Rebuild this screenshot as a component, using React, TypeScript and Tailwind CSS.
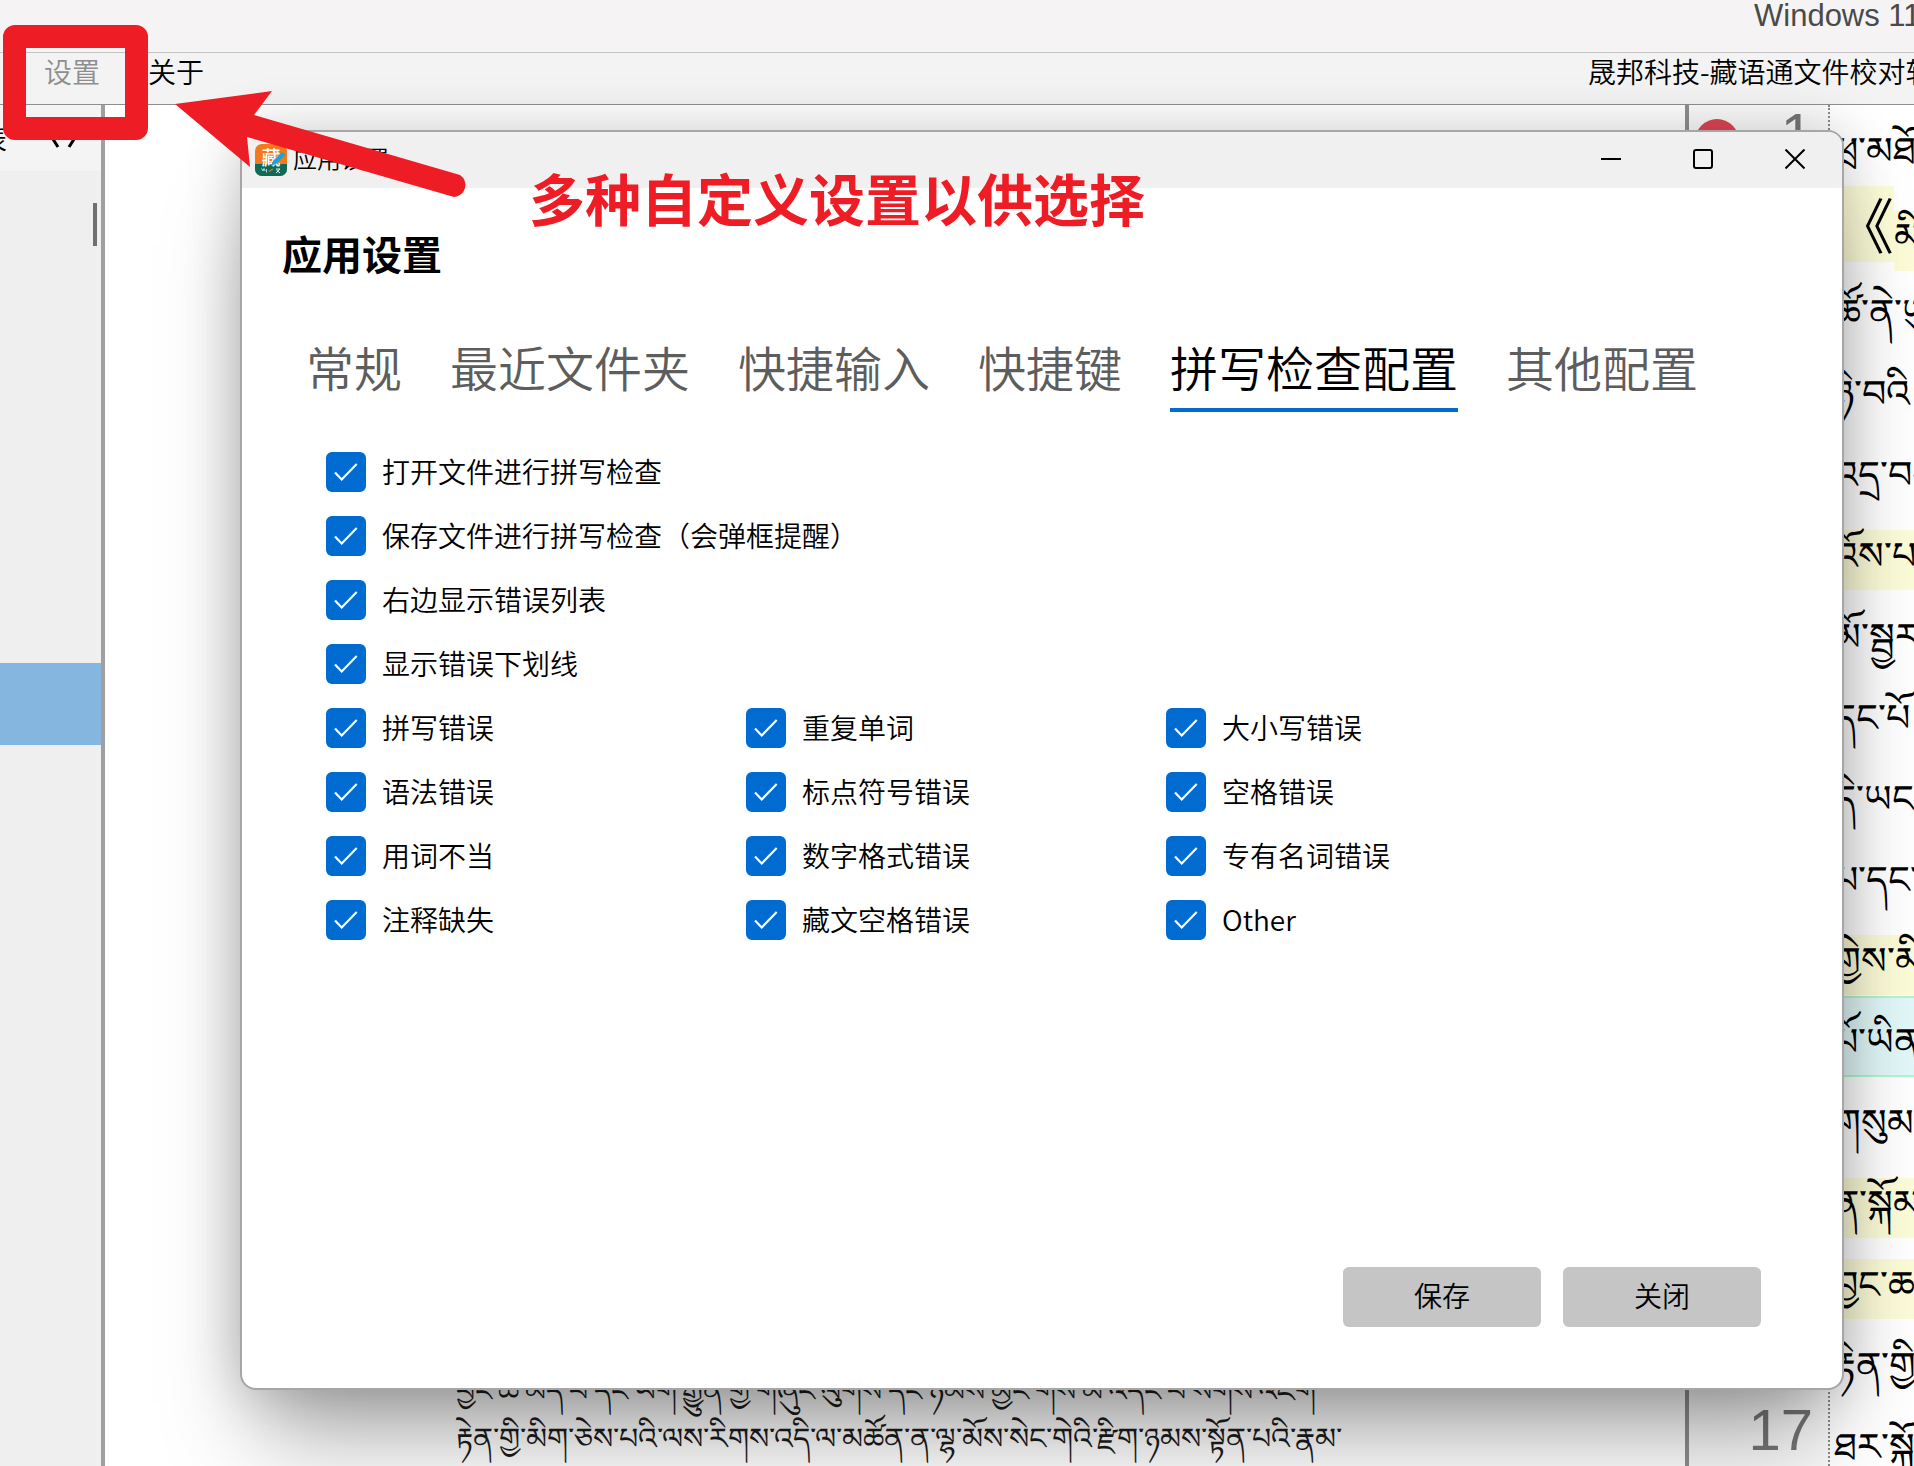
import { useState } from 'react';

const TABS = ['常规', '最近文件夹', '快捷输入', '快捷键', '拼写检查配置', '其他配置'];

const GENERAL_OPTIONS = [
  '打开文件进行拼写检查',
  '保存文件进行拼写检查（会弹框提醒）',
  '右边显示错误列表',
  '显示错误下划线',
];

const ERROR_TYPES = [
  '拼写错误', '重复单词', '大小写错误',
  '语法错误', '标点符号错误', '空格错误',
  '用词不当', '数字格式错误', '专有名词错误',
  '注释缺失', '藏文空格错误', 'Other',
];

type Mark = 'none' | 'error' | 'current';

const EDITOR_LINES: { text: string; mark: Mark; quote?: boolean }[] = [
  { text: 'ཕྲ་མཐོང', mark: 'none' },
  { text: 'མི', mark: 'error', quote: true },
  { text: 'ཚོ་ནེ་ཡུལ', mark: 'none' },
  { text: 'ཉེ་བའི', mark: 'none' },
  { text: 'འདྲ་བར', mark: 'none' },
  { text: 'འོས་པའི', mark: 'error' },
  { text: 'མོ་སྦྱར', mark: 'none' },
  { text: 'དང་པོ', mark: 'none' },
  { text: 'དེ་ཡང', mark: 'none' },
  { text: 'པ་དང་', mark: 'none' },
  { text: 'གྱེས་མི', mark: 'error' },
  { text: 'པོ་ཡིན', mark: 'current' },
  { text: 'གསུམ་', mark: 'none' },
  { text: 'ན་སྐོམ', mark: 'error' },
  { text: 'བྱང་ཆ', mark: 'error' },
  { text: 'རྟེན་གྱི', mark: 'none' },
  { text: 'ཐར་སྐོ', mark: 'none' },
];

function CheckOption({ label }: { label: string }) {
  const [checked, setChecked] = useState(true);
  return (
    <label className="flex h-16 items-center gap-4 text-[28px] whitespace-nowrap">
      <span className="grid size-10 shrink-0">
        <input
          type="checkbox"
          checked={checked}
          onChange={(e) => setChecked(e.target.checked)}
          className="col-start-1 row-start-1 size-10 appearance-none rounded-md border-2 border-[#006cd2] bg-white checked:bg-[#006cd2]"
        />
        <svg viewBox="0 0 40 40" className="pointer-events-none col-start-1 row-start-1 size-10" aria-hidden="true">
          {checked && <path d="M9 20.5 15.7 27.5 30.7 12" fill="none" stroke="white" strokeWidth="2.2" />}
        </svg>
      </span>
      <span className="pb-0.5">{label}</span>
    </label>
  );
}

function AppLogo() {
  return (
    <svg viewBox="0 0 32 32" className="size-8 shrink-0" aria-hidden="true">
      <defs>
        <clipPath id="logo-clip">
          <rect width="32" height="32" rx="7" />
        </clipPath>
      </defs>
      <g clipPath="url(#logo-clip)">
        <rect width="32" height="32" fill="#f5791b" />
        <rect y="20" width="32" height="12" fill="#0d6b58" />
        <text x="16" y="21" fontSize="19" fontWeight="500" fill="white" textAnchor="middle">藏</text>
        <path d="M16 22 18 17 27 8 30.500 11 21 20Z" fill="#18a4dc" />
        <path d="M6.500 24.500 8 27 9 24.500 10 27M11.500 25V28.500" stroke="#d5e5df" strokeWidth="0.900" fill="none" />
        <path d="M14 27.500 18 25" stroke="#d9772a" strokeWidth="1.400" />
        <path d="M21 25H25L21 29M21.500 26 25 29" stroke="white" strokeWidth="0.900" fill="none" />
      </g>
    </svg>
  );
}

function SettingsDialog() {
  const [active, setActive] = useState(4);
  return (
    <section
      role="dialog"
      aria-label="应用设置"
      className="absolute top-[130px] right-[70px] bottom-[76px] left-[240px] flex flex-col overflow-hidden rounded-2xl border-2 border-[#a6a6a6] bg-white shadow-[0_64px_88px_-20px_rgba(0,0,0,0.34),0_0_56px_rgba(0,0,0,0.2)]"
    >
      <header className="flex h-14 shrink-0 items-center bg-[#f0f0f0] pl-[13px]">
        <AppLogo />
        <span className="ml-1.5 pb-1 text-2xl">应用设置</span>
        <div className="ml-auto flex h-full pr-px pb-0.5">
          <button aria-label="最小化" className="grid w-[92px] place-items-center">
            <svg viewBox="0 0 20 20" className="size-5" fill="none" stroke="black" strokeWidth="2"><path d="M0 10H20" /></svg>
          </button>
          <button aria-label="最大化" className="grid w-[92px] place-items-center">
            <svg viewBox="0 0 20 20" className="size-5" fill="none" stroke="black" strokeWidth="2"><rect x="1" y="1" width="18" height="18" rx="2" /></svg>
          </button>
          <button aria-label="关闭窗口" className="grid w-[92px] place-items-center">
            <svg viewBox="0 0 20 20" className="size-5" fill="none" stroke="black" strokeWidth="2"><path d="M0.500 0.500 19.500 19.500M19.500 0.500 0.500 19.500" /></svg>
          </button>
        </div>
      </header>

      <h1 className="mt-10 pl-10 text-[40px] leading-[50px] font-bold">应用设置</h1>

      <nav role="tablist" className="mt-[54px] flex gap-12 pl-16 text-5xl">
        {TABS.map((tab, i) => (
          <button
            key={tab}
            role="tab"
            aria-selected={i === active}
            onClick={() => setActive(i)}
            className={
              i === active
                ? 'h-20 border-b-4 border-[#006cd2] pb-2 whitespace-nowrap text-black'
                : 'h-20 border-b-4 border-transparent pb-2 whitespace-nowrap text-[#5d5d5d]'
            }
          >
            {tab}
          </button>
        ))}
      </nav>

      <div className="mt-7 pl-[84px]">
        {GENERAL_OPTIONS.map((o) => (
          <CheckOption key={o} label={o} />
        ))}
        <div className="grid grid-cols-[420px_420px_auto]">
          {ERROR_TYPES.map((o) => (
            <CheckOption key={o} label={o} />
          ))}
        </div>
      </div>

      <footer className="mt-auto flex justify-end gap-[22px] pr-[81px] pb-[61px] text-[28px]">
        <button className="h-[60px] w-[198px] rounded-md bg-[#c5c5c5] pb-1">保存</button>
        <button className="h-[60px] w-[198px] rounded-md bg-[#c5c5c5] pb-1">关闭</button>
      </footer>
    </section>
  );
}

function EditorLine({ text, mark, quote }: { text: string; mark: Mark; quote?: boolean }) {
  if (quote) {
    return (
      <div className="flex h-[81px] items-start">
        <span className="h-[76px] w-[60px] shrink-0 bg-[#fdfcd8] text-6xl leading-[74px]">《</span>
        <span className="mt-[25px] h-[60px] flex-1 bg-[#fdfcd8] leading-[46px]">{text}</span>
      </div>
    );
  }
  return (
    <div className={mark === 'current' ? 'h-[81px] border-y-2 border-[#b2f5d4] bg-[#e2f8f8] pt-[18px]' : 'h-[81px] pt-5'}>
      <div className={mark === 'error' ? 'h-[60px] bg-[#fdfcd8] leading-[46px]' : 'h-[60px] leading-[46px]'}>{text}</div>
    </div>
  );
}

export default function App() {
  return (
    <div className="relative flex h-screen flex-col overflow-hidden bg-white font-['Noto_Sans_CJK_SC','Microsoft_YaHei',sans-serif] font-[350] text-black">
      <div className="flex h-[52px] shrink-0 justify-end bg-[#f5f3f4]">
        <span className="w-40 overflow-hidden font-['Liberation_Sans',Arial,sans-serif] text-[31px] leading-[32px] whitespace-nowrap text-[#4a4a4a]">
          Windows 11
        </span>
      </div>

      <div className="flex h-[53px] shrink-0 items-center border-t border-b border-t-[#c4c2c3] border-b-[#8f8f8f] bg-[#f3f3f3] pb-4 text-[28px]">
        <button className="ml-11 text-[#8e8e8e]">设置</button>
        <button className="ml-12">关于</button>
        <span className="ml-auto w-[326px] overflow-hidden whitespace-nowrap">晟邦科技-藏语通文件校对软件</span>
      </div>

      <main className="flex min-h-0 flex-1">
        <aside className="flex w-[101px] shrink-0 flex-col overflow-hidden bg-[#efefef]">
          <div className="flex h-[66px] shrink-0 items-center bg-[#f4f4f4] text-[28px]">
            <span className="flex w-[7px] justify-end whitespace-nowrap">列表</span>
            <svg viewBox="0 0 34 24" className="mb-1 ml-[43px] h-6 w-[34px]" fill="none" stroke="black" strokeWidth="3" aria-hidden="true">
              <path d="M8 8 1 1M8 1 1 12 8 23M19 23 26 12 19 1" />
            </svg>
          </div>
          <div className="mt-8 mr-1 h-[43px] w-1 shrink-0 self-end bg-[#707070]" />
          <div className="mt-[417px] h-[82px] shrink-0 bg-[#84b6e0]" />
        </aside>
        <div className="w-1 shrink-0 bg-[#9f9f9f]" />

        <article className="flex min-w-0 flex-1 flex-col justify-end overflow-hidden pb-1.5 pl-[351px] text-[30px] leading-[48px] font-medium whitespace-nowrap text-[#1c1c1c]">
          <p>བྱང་ཆ་མེད་པ་དང་ཡིག་རྒྱུན་གྱི་གཞུང་ལུགས་དང་ཉམས་མྱོང་གིས་མི་འདང་བ་སོགས་འཇིག</p>
          <p>རྟེན་གྱི་མིག་ཅེས་པའི་ལས་རིགས་འདི་ལ་མཚོན་ན་ལྷ་མོས་སེང་གེའི་རྫིག་ཉམས་སྟོན་པའི་རྣམ་</p>
        </article>
        <div className="w-1 shrink-0 bg-[#8f8f8f]" />

        <ol className="w-[141px] shrink-0 overflow-hidden border-r-2 border-dotted border-[#8a8a8a] bg-[#fafafa] pr-[15px] font-['Liberation_Sans',Arial,sans-serif] text-[58px] leading-[58px] text-[#767676]">
          {EDITOR_LINES.map((_, i) => (
            <li key={i} className="flex h-[81px] items-start justify-between pl-1.5">
              {i === 0 ? <span className="mt-[14px] size-11 rounded-full bg-[#dd4555]" /> : <span />}
              <span>{i + 1}</span>
            </li>
          ))}
        </ol>

        <div className="w-[84px] shrink-0 overflow-hidden pl-1 text-[38px] whitespace-nowrap">
          {EDITOR_LINES.map((line, i) => (
            <EditorLine key={i} {...line} />
          ))}
        </div>
      </main>

      <SettingsDialog />

      <svg viewBox="0 0 300 120" className="pointer-events-none absolute top-[85px] left-[170px] h-[120px] w-[300px]" fill="#ee1c24" aria-hidden="true">
        <path d="M5 19 102 6 84 30 290 90A12 12 0 0 1 284 112L77 52 80 82Z" />
      </svg>
      <div className="pointer-events-none absolute top-[25px] left-[3px] h-[115px] w-[145px] rounded-xl border-[23px] border-[#ee1c24]" />
      <p className="pointer-events-none absolute top-[169px] left-[529px] text-[56px] leading-[56px] font-bold whitespace-nowrap text-[#ee1c24]">
        多种自定义设置以供选择
      </p>
    </div>
  );
}
